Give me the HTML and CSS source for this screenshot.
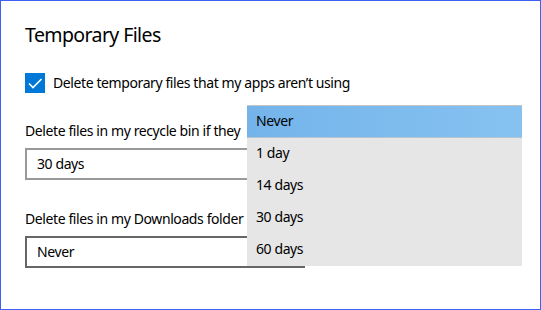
FILE: index.html
```html
<!DOCTYPE html>
<html>
<head>
<meta charset="utf-8">
<link rel="stylesheet" href="styles.css">
</head>
<body>
<div class="frame">
  <h1 class="title">Temporary Files</h1>
  <label class="check-row">
    <span class="checkbox">
      <svg width="20" height="20" viewBox="0 0 20 20"><path d="M4 10.5 L8 14.5 L16.5 6" fill="none" stroke="#fff" stroke-width="1.6"/></svg>
    </span>
    <span class="check-label">Delete temporary files that my apps aren’t using</span>
  </label>
  <div class="field">
    <div class="field-label">Delete files in my recycle bin if they</div>
    <div class="select">30 days</div>
  </div>
  <div class="field">
    <div class="field-label">Delete files in my Downloads folder</div>
    <div class="select select-hover">Never</div>
  </div>
  <ul class="popup">
    <li class="item item-selected">Never</li>
    <li class="item">1 day</li>
    <li class="item">14 days</li>
    <li class="item">30 days</li>
    <li class="item">60 days</li>
  </ul>
</div>
</body>
</html>
```
FILE: styles.css
```css
html, body {
  margin: 0;
  padding: 0;
  background: #fff;
}
.frame {
  position: relative;
  box-sizing: border-box;
  width: 541px;
  height: 310px;
  border: 1px solid #3f5ff5;
  padding: 20px 0 0 24px;
  font-family: "Noto Sans", "Open Sans", sans-serif;
  color: #000;
  letter-spacing: -0.4px;
}
.title {
  margin: 0;
  font-size: 19.5px;
  font-weight: 400;
  line-height: 28px;
  letter-spacing: -0.6px;
}
.check-row {
  display: flex;
  align-items: center;
  gap: 8px;
  margin-top: 24px;
}
.checkbox {
  width: 20px;
  height: 20px;
  background: #0078d7;
  display: block;
}
.checkbox svg { display: block; }
.check-label {
  font-size: 14px;
  line-height: 20px;
}
.field {
  margin-top: 28px;
}
.field + .field { margin-top: 29px; }
.field-label {
  font-size: 14px;
  line-height: 20px;
}
.select {
  box-sizing: border-box;
  margin-top: 7px;
  width: 280px;
  height: 32px;
  border: 2px solid #999;
  padding: 0 10px;
  font-size: 14px;
  line-height: 28px;
}
.select-hover { border-color: #666; }
.popup {
  position: absolute;
  left: 246px;
  top: 104px;
  width: 275px;
  margin: 0;
  padding: 0;
  list-style: none;
  background: #e6e6e6;
  border-top: 1px solid #c4c4c4;
}
.item {
  height: 32px;
  line-height: 30px;
  padding-left: 9px;
  font-size: 14px;
}
.item-selected {
  height: 31px;
  background: linear-gradient(90deg, #74b4ea, #86c2f1);
  border-bottom: 1px solid #b5c4d0;
}
```
